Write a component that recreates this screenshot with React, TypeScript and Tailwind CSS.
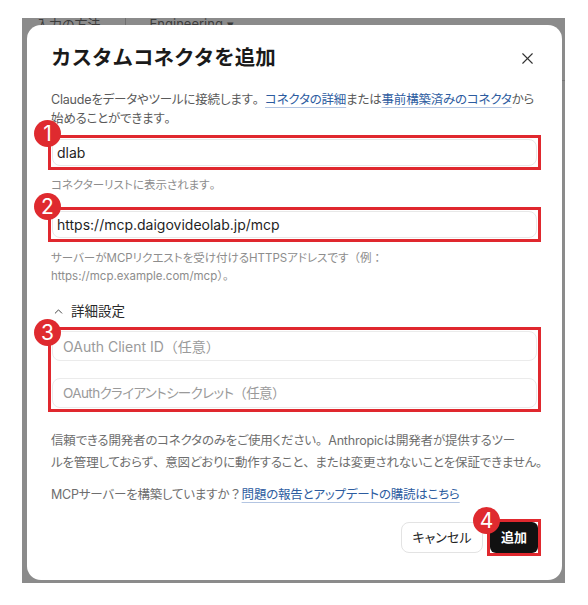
import { X, ChevronUp } from "lucide-react";

const font = "[font-family:Inter,'Noto_Sans_CJK_JP',sans-serif] [font-feature-settings:'palt']";

// full-width punctuation keeps its width (palt would narrow it)
function W({ c }: { c: string }) {
  return <span className="[font-feature-settings:normal]">{c}</span>;
}

function Badge({ n, className }: { n: string; className: string }) {
  return (
    <span
      className={`absolute z-10 flex h-[27px] w-[27px] items-center justify-center rounded-full bg-[#df2a2f] text-[21px] leading-none text-white ${className}`}
    >
      {n}
    </span>
  );
}

function Link({ children }: { children: React.ReactNode }) {
  return (
    <a className="text-[#2d5c9f] underline decoration-[#b3c5e2] decoration-1 underline-offset-[3px]">{children}</a>
  );
}

export default function App() {
  return (
    <div className={`relative h-[605px] w-[588px] bg-white ${font}`}>
      {/* backdrop */}
      <div className="absolute left-[22px] top-[18px] h-[565px] w-[543px] overflow-hidden bg-[#8b8b8b]">
        <div className="flex items-center gap-6 pl-[14px] text-[13px] leading-[10px] text-[#3c3c3c]">
          <span>入力の方法</span>
          <span className="h-3 border-l border-[#6f6f6f]" />
          <span>Engineering ▾</span>
        </div>
        <div className="absolute right-0 top-[62px] w-[10px] border-t border-[#777]" />
      </div>

      {/* dialog */}
      <div className="absolute left-[27px] top-[25px] w-[535px] rounded-[14px] bg-white px-6 pb-[24px] pt-[19px]">
        <div className="flex items-center justify-between">
          <h2 className="text-[20.5px] font-bold leading-[28px] text-[#1a1a1a] [font-feature-settings:normal]">
            カスタムコネクタを追加
          </h2>
          <X className="mr-[1px] h-[19px] w-[19px] text-[#333]" strokeWidth={1.4} />
        </div>

        <p className="mt-[18px] whitespace-nowrap text-[12.5px] leading-[19px] tracking-[-0.2px] text-[#5a5a5a]">
          Claudeをデータやツールに接続します<W c="。" />
          <Link>コネクタの詳細</Link>または<Link>事前構築済みのコネクタ</Link>から
          <br />
          始めることができます<W c="。" />
        </p>

        <div className="relative -mx-[3px] mt-[7px] border-[3px] border-[#e0282e] p-px">
          <Badge n="1" className="-left-[17px] -top-[18px]" />
          <div className="flex h-[27px] items-center rounded-lg border border-[#e8e8e8] px-[4px] text-[14px] text-[#1f1f1f]">
            dlab
          </div>
        </div>
        <p className="mt-[6px] text-[11.5px] leading-[18px] text-[#8d8d8d]">
          コネクターリストに表示されます<W c="。" />
        </p>

        <div className="relative -mx-[3px] mt-[13px] border-[3px] border-[#e0282e] p-px">
          <Badge n="2" className="-left-[17px] -top-[17px]" />
          <div className="flex h-[27px] items-center rounded-lg border border-[#e8e8e8] px-[4px] text-[14px] text-[#1f1f1f]">
            https://mcp.daigovideolab.jp/mcp
          </div>
        </div>
        <p className="mt-[7px] whitespace-nowrap text-[11.5px] leading-[18px] text-[#8d8d8d]">
          サーバーがMCPリクエストを受け付けるHTTPSアドレスです<W c="（" />例<W c="：" />
          <br />
          https://mcp.example.com/mcp<W c="）。" />
        </p>

        <div className="mt-[16px] flex items-center gap-[6px] text-[13.5px] leading-[20px] text-[#2a2a2a]">
          <ChevronUp className="ml-[1px] h-[13px] w-[13px]" strokeWidth={1.6} />
          <span>詳細設定</span>
        </div>

        <div className="relative -mx-[3px] mt-[6px] flex flex-col gap-[17px] border-[3px] border-[#e0282e] p-px">
          <Badge n="3" className="-left-[17px] -top-[11px]" />
          <div className="flex h-[30px] items-center rounded-lg border border-[#ebebeb] px-[10px] text-[14px] text-[#9a9a9a]">
            OAuth Client ID<W c="（" />任意<W c="）" />
          </div>
          <div className="flex h-[30px] items-center rounded-lg border border-[#ebebeb] px-[10px] text-[13.5px] tracking-[-0.6px] text-[#9a9a9a]">
            OAuthクライアントシークレット<W c="（" />任意<W c="）" />
          </div>
        </div>

        <p className="mt-[18px] whitespace-nowrap text-[12.5px] leading-[22px] tracking-[-0.2px] text-[#6e6e6e]">
          信頼できる開発者のコネクタのみをご使用ください<W c="。" />Anthropicは開発者が提供するツー
          <br />
          ルを管理しておらず<W c="、" />意図どおりに動作すること<W c="、" />または変更されないことを保証できません
          <W c="。" />
        </p>

        <p className="mt-[10px] text-[12.5px] leading-[22px] tracking-[-0.2px] text-[#6e6e6e]">
          MCPサーバーを構築していますか<W c="？" />
          <Link>問題の報告とアップデートの購読はこちら</Link>
        </p>

        <div className="-mr-[3px] mt-[13px] flex items-center justify-end gap-1">
          <button className="h-[31px] w-[82px] rounded-lg border border-[#e3e3e3] bg-white text-[13px] text-[#222]">
            キャンセル
          </button>
          <div className="relative border-[3px] border-[#e0282e]">
            <Badge n="4" className="-left-[17px] -top-[15px]" />
            <button className="block h-[31px] w-[48px] rounded-md bg-[#111] text-[13px] font-bold text-white">
              追加
            </button>
          </div>
        </div>
      </div>
    </div>
  );
}
